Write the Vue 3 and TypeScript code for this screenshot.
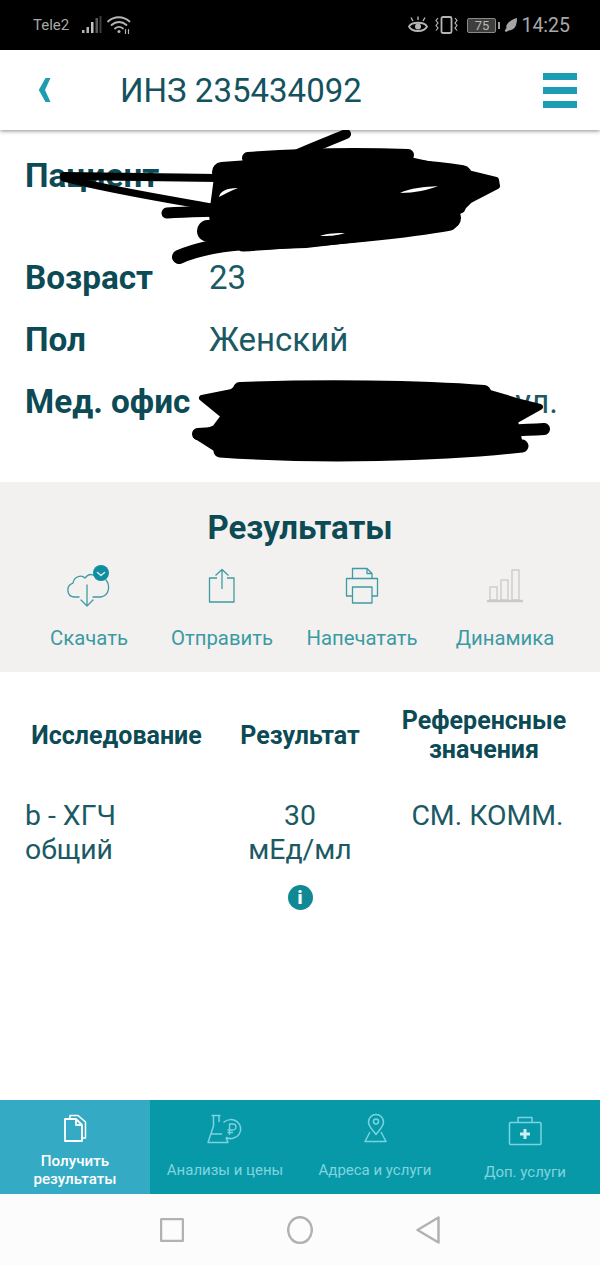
<script setup lang="ts">
interface Row { label: string; value: string; tall?: boolean; right?: boolean }
const rows: Row[] = [
  { label: 'Пациент', value: '', tall: true },
  { label: 'Возраст', value: '23' },
  { label: 'Пол', value: 'Женский' },
  { label: 'Мед. офис', value: 'ул.', tall: true, right: true },
]
</script>

<template>
  <div class="page">
    <div class="status">
      <span class="carrier">Tele2</span>
      <svg class="signal" width="20" height="18" viewBox="0 0 20 18">
        <rect x="0" y="14" width="2.5" height="3" fill="#b5b5b5" />
        <rect x="4.5" y="11" width="2.5" height="6" fill="#b5b5b5" />
        <rect x="9" y="6" width="2.5" height="11" fill="#c4c4c4" />
        <rect x="13.5" y="2" width="2.5" height="15" fill="#5a5a5a" />
        <rect x="17.5" y="0" width="2" height="17" fill="#3c3c3c" />
      </svg>
      <svg class="wifi" width="24" height="20" viewBox="0 0 24 20" fill="none" stroke="#b5b5b5" stroke-width="1.8" stroke-linecap="round">
        <path d="M1 6.500C7 .8 16.500 .8 22.500 6.500" />
        <path d="M4.500 10C9 6 15 6 19.500 10" />
        <path d="M8 13.500C10.500 11.500 13.500 11.500 16 13.500" />
        <circle cx="12" cy="16.500" r="1.500" fill="#b5b5b5" stroke="none" />
        <path d="M18.500 14.500v4M21.500 14.500v4" stroke-width="1.200" />
      </svg>
      <div class="status-right">
        <svg width="20" height="18" viewBox="0 0 20 18" fill="none" stroke="#b5b5b5" stroke-width="1.800">
          <path d="M1 10.500C4 5.500 16 5.500 19 10.500C16 16.500 4 16.500 1 10.500Z" />
          <circle cx="10" cy="10.500" r="3" fill="#b5b5b5" stroke="none" />
          <path d="M3 1.500L5 5M10 .5V4M17 1.500L15 5" stroke-width="1.400" />
        </svg>
        <svg class="vibrate" width="23" height="18" viewBox="0 0 23 18" fill="none" stroke="#b5b5b5" stroke-width="1.500">
          <rect x="6.500" y="1" width="10" height="16" rx="1.500" stroke-width="1.800" />
          <path d="M3 2L1 4.500L3 7L1 9.500L3 12L1 14.500M20 2L22 4.500L20 7L22 9.500L20 12L22 14.500" stroke-width="1.200" />
        </svg>
        <div class="battery"><span>75</span></div>
        <i class="nub"></i>
        <svg class="leaf" width="13" height="14" viewBox="0 0 13 14">
          <path d="M13 0C13 7 11 12 5 12.500L2 14L.8 13C1.500 11 2 10.500 2.500 10C1 6 7 1.500 13 0Z" fill="#a5a5a5" />
        </svg>
        <span class="time">14:25</span>
      </div>
    </div>

    <header class="topbar">
      <svg class="back" width="13" height="26" viewBox="0 0 13 26">
        <path d="M7.500 1H12.500L7 13L12.500 25H7.500L.8 13Z" fill="#1e9db0" />
      </svg>
      <h1 class="title">ИНЗ 235434092</h1>
      <div class="burger"><i></i><i></i><i></i></div>
    </header>

    <section class="info">
      <div v-for="row in rows" :key="row.label" class="row" :class="{ tall: row.tall }">
        <div class="label">{{ row.label }}</div>
        <div class="value" :class="{ right: row.right }">{{ row.value }}</div>
      </div>
      <svg class="scribble" width="600" height="352" viewBox="0 130 600 352">
        <g fill="none" stroke="#000" stroke-linejoin="round" stroke-linecap="round">
          <path fill="#000" stroke-width="6" d="M218 170L300 158L400 158L455 170L496 180L497 186L470 200L458 212L445 224L383 236L306 245L245 247L215 240L212 215Z" />
          <path stroke-width="10" d="M346 134C325 143 305 150 285 160" />
          <path stroke-width="12" d="M248 158C300 154 360 153 408 155" />
          <path stroke-width="20" d="M222 172C300 165 400 165 462 175" />
          <path stroke-width="11" d="M167 213C240 208 360 212 460 208" />
          <path stroke-width="22" d="M208 231C290 225 380 225 450 218" />
          <path stroke-width="13" d="M243 245C320 240 400 233 450 224" />
          <path stroke-width="14" d="M179 257C195 250 215 245 245 243" />
          <path stroke-width="8" d="M64 176L218 178" />
          <path stroke-width="7" d="M64 178C110 190 160 198 212 207" />
        </g>
        <g fill="none" stroke="#000" stroke-linejoin="round" stroke-linecap="round">
          <path fill="#000" stroke-width="6" d="M240 386L480 390L520 402L540 407L515 421L520 445L400 455L250 456L218 450L196 436L215 428L224 416L202 398L232 392Z" />
          <path stroke-width="14" d="M240 389C320 386 420 387 484 392" />
          <path stroke-width="12" d="M198 434C300 428 450 435 544 429" />
          <path stroke-width="13" d="M220 451C320 458 440 455 522 446" />
        </g>
        <path fill="#fff" d="M400 193C410 188 425 187 438 186C428 190 415 193 400 193ZM320 236C328 233 338 233 345 233C336 236 328 236 320 236ZM219 197C220 192 225 188 238 188C230 191 225 194 219 197Z" />
      </svg>
    </section>

    <section class="results">
      <h2 class="results-title">Результаты</h2>
      <div class="actions">
        <div class="action">
          <svg class="action-icon" viewBox="65 565 48 44" fill="none" stroke="#3f9ba3" stroke-width="1.300" stroke-linecap="round" stroke-linejoin="round">
            <path d="M79 597H74C66 596 66 585 73 583C74 577 81 574 85 578C88 574 92 574 95 576M106 580C110 585 110 595 101 597H93" />
            <path d="M87 585V606M81 600L87 606L93 600" />
            <circle cx="101" cy="573" r="8" fill="#0f8ea0" stroke="none" />
            <path d="M97.500 572.500L101 575.500L104.500 572.500" stroke="#d6eef1" stroke-width="1.500" />
          </svg>
          <span>Скачать</span>
        </div>
        <div class="action">
          <svg class="action-icon" viewBox="198 565 48 44" fill="none" stroke="#3f9ba3" stroke-width="1.300" stroke-linejoin="round">
            <path d="M217 578H209.500V602H234V578H227" />
            <path d="M222 570V589M215.500 575.500L222 569.500L228.500 575.500" />
          </svg>
          <span>Отправить</span>
        </div>
        <div class="action">
          <svg class="action-icon" viewBox="338 565 48 44" fill="none" stroke="#3f9ba3" stroke-width="1.300" stroke-linejoin="round">
            <path d="M352.500 578V568.500H367L372 573.500V578" />
            <path d="M367 568.500V573.500H372" />
            <path d="M352.500 596H346.500V578.500H377.500V596H372" />
            <rect x="352.500" y="587" width="19.500" height="16" />
          </svg>
          <span>Напечатать</span>
        </div>
        <div class="action">
          <svg class="action-icon" viewBox="481 565 48 44" fill="none" stroke="#c9c9c9" stroke-width="1.300">
            <rect x="490" y="587" width="7" height="13" />
            <rect x="501" y="580" width="7" height="20" />
            <rect x="512" y="570" width="7" height="30" />
            <path d="M487 601H523" stroke-width="2.500" />
          </svg>
          <span>Динамика</span>
        </div>
      </div>
    </section>

    <section class="table">
      <div class="head first">Исследование</div>
      <div class="head">Результат</div>
      <div class="head third">Референсные<br />значения</div>
      <div class="cell study">b - ХГЧ<br />общий</div>
      <div class="cell center">
        30<br />мЕд/мл
        <span class="info-dot">i</span>
      </div>
      <div class="cell center last">СМ. КОММ.</div>
    </section>

    <div class="spacer"></div>

    <nav class="tabs">
      <div class="tab active">
        <svg class="tab-icon" viewBox="0 1100 150 46" fill="none" stroke="#fff" stroke-width="1.800" stroke-linejoin="round">
          <path d="M71 1119H76L82 1125V1141H65V1119H71M76 1119V1125H82" />
          <path d="M70 1119V1115.500H78L85.500 1122V1138H82" stroke-width="1.500" />
        </svg>
        <div class="tab-label">Получить<br />результаты</div>
      </div>
      <div class="tab">
        <svg class="tab-icon" viewBox="150 1100 150 46" fill="none" stroke="#79d3e0" stroke-width="1.500" stroke-linejoin="round">
          <path d="M211.500 1115.500H220.500M213.500 1115.500V1126L208 1142.500H228L226 1137.500M219 1115.500V1122" />
          <path d="M211 1134H222" />
          <path d="M223.500 1122.500A10 9.500 0 1 1 226 1137.500" />
          <path d="M229.500 1135V1124H233A2.800 2.800 0 0 1 233 1130H227.500M227.500 1132.500H233" stroke-width="1.400" />
        </svg>
        <div class="tab-label">Анализы и цены</div>
      </div>
      <div class="tab">
        <svg class="tab-icon" viewBox="300 1100 150 46" fill="none" stroke="#79d3e0" stroke-width="1.500" stroke-linejoin="round">
          <path d="M376 1134.500C372 1129 368.500 1126.500 368.500 1122A7.500 7.500 0 0 1 383.500 1122C383.500 1126.500 380 1129 376 1134.500Z" />
          <circle cx="376" cy="1121.500" r="2.500" />
          <path d="M370 1132L365 1141.500H386L381 1132" />
        </svg>
        <div class="tab-label">Адреса и услуги</div>
      </div>
      <div class="tab">
        <svg class="tab-icon" viewBox="450 1100 150 46" fill="none" stroke="#79d3e0" stroke-width="1.500" stroke-linejoin="round">
          <rect x="509.500" y="1122.500" width="31.500" height="22" rx="1" />
          <path d="M518 1122V1117.500H532V1122" />
          <path d="M525 1129V1139M520 1134H530" stroke="#cdeff3" stroke-width="3" />
        </svg>
        <div class="tab-label low">Доп. услуги</div>
      </div>
    </nav>

    <div class="sysnav">
      <svg width="24" height="24" viewBox="0 0 24 24"><rect x="1" y="1" width="22" height="22" rx="1.500" fill="none" stroke="#b2b2b2" stroke-width="2.500" /></svg>
      <svg width="26" height="28" viewBox="0 0 26 28"><ellipse cx="13" cy="14" rx="11.800" ry="12.800" fill="none" stroke="#b2b2b2" stroke-width="2.500" /></svg>
      <svg width="24" height="28" viewBox="0 0 24 28"><path d="M22.500 1.500V26.500L1.500 14Z" fill="none" stroke="#b2b2b2" stroke-width="2.500" stroke-linejoin="round" /></svg>
    </div>
  </div>
</template>

<style scoped>
.page {
  width: 600px;
  height: 1265px;
  display: flex;
  flex-direction: column;
  background: #fff;
  font-family: Roboto, "Liberation Sans", sans-serif;
  color: #0d4f5a;
  overflow: hidden;
}
.status {
  height: 50px;
  flex: none;
  background: #000;
  display: flex;
  align-items: center;
  padding: 0 30px 0 33px;
  color: #a8a8a8;
}
.carrier { font-size: 15px; }
.signal { margin-left: 13px; }
.wifi { margin-left: 5px; }
.status-right { margin-left: auto; display: flex; align-items: center; }
.vibrate { margin-left: 7px; }
.battery {
  margin-left: 9px;
  width: 29px;
  height: 15px;
  background: #3e3e3e;
  border: 1px solid #8a8a8a;
  border-radius: 2px;
  box-sizing: border-box;
  display: flex;
  align-items: center;
  justify-content: center;
  font-size: 13px;
  color: #b8b8b8;
}
.nub { width: 2px; height: 7px; background: #a0a0a0; margin-left: 2px; }
.leaf { margin-left: 4px; }
.time { font-size: 19.500px; margin-left: 4px; color: #a8a8a8; }

.topbar {
  height: 80px;
  flex: none;
  display: flex;
  align-items: center;
  box-sizing: border-box;
  padding: 0 23px 0 38px;
  background: #fff;
  box-shadow: 0 1px 4px rgba(0, 0, 0, 0.45);
  position: relative;
  z-index: 1;
}
.back { margin-top: -1px; }
.title {
  margin: 1px 0 0 69px;
  font-size: 33px;
  font-weight: 400;
  color: #14535e;
}
.burger {
  margin-left: auto;
  width: 34px;
  display: flex;
  flex-direction: column;
  gap: 7px;
}
.burger i { display: block; height: 7px; background: #1d9db3; }

.info {
  position: relative;
  height: 352px;
  flex: none;
  box-sizing: border-box;
  padding: 26px 0 0 25px;
  display: flex;
  flex-direction: column;
  gap: 22px;
}
.row {
  display: grid;
  grid-template-columns: 184px 349px;
  line-height: 40px;
  font-size: 33px;
  height: 40px;
}
.row.tall { height: 80px; }
.label { font-weight: 700; font-size: 33.300px; color: #0c4a55; white-space: nowrap; }
.value { color: #1b5a64; }
.value.right { text-align: right; }
.scribble { position: absolute; left: 0; top: 0; }

.results {
  height: 190px;
  flex: none;
  box-sizing: border-box;
  padding-top: 26px;
  background: #f2f1f0;
}
.results-title {
  margin: 0;
  text-align: center;
  font-size: 33px;
  line-height: 40px;
  font-weight: 700;
  color: #0c4a55;
}
.actions {
  margin-top: 17px;
  padding-left: 30px;
  display: grid;
  grid-template-columns: 118px 148px 132px 154px;
}
.action {
  display: flex;
  flex-direction: column;
  align-items: center;
  font-size: 20.300px;
  line-height: 24px;
  color: #3b9aa2;
  white-space: nowrap;
}
.action-icon { width: 48px; height: 44px; display: block; margin-bottom: 17px; }

.table {
  flex: none;
  padding: 34px 0 0 25px;
  display: grid;
  grid-template-columns: 205px 140px 235px;
  row-gap: 35px;
  align-items: center;
}
.head {
  font-size: 25px;
  line-height: 29px;
  font-weight: 700;
  text-align: center;
  color: #0c4a55;
  white-space: nowrap;
}
.head.first { padding-right: 22px; }
.head.third { padding-right: 7px; }
.cell {
  align-self: start;
  font-size: 28.400px;
  line-height: 34px;
  color: #1b5a64;
  white-space: nowrap;
}
.center { text-align: center; }
.info-dot {
  display: block;
  width: 25px;
  height: 25px;
  margin: 18px auto 0;
  border-radius: 50%;
  background: #0f8a94;
  color: #fff;
  font-size: 18px;
  line-height: 25px;
  font-weight: 900;
}

.spacer { flex: 1; }

.tabs {
  height: 94px;
  flex: none;
  display: grid;
  grid-template-columns: repeat(4, 150px);
  background: #0899a8;
}
.tab { display: flex; flex-direction: column; }
.tab.active { background: #35aac4; }
.tab-icon { width: 150px; height: 46px; display: block; flex: none; }
.tab-label {
  height: 48px;
  display: flex;
  align-items: center;
  justify-content: center;
  text-align: center;
  font-size: 15px;
  line-height: 18px;
  color: #80d4df;
}
.tab-label.low { padding-top: 4px; height: 44px; }
.active .tab-label { color: #fff; font-weight: 500; font-size: 15.200px; }

.sysnav {
  height: 71px;
  flex: none;
  box-sizing: border-box;
  background: #fcfcfc;
  display: flex;
  align-items: center;
  justify-content: center;
  gap: 103px;
}
</style>
